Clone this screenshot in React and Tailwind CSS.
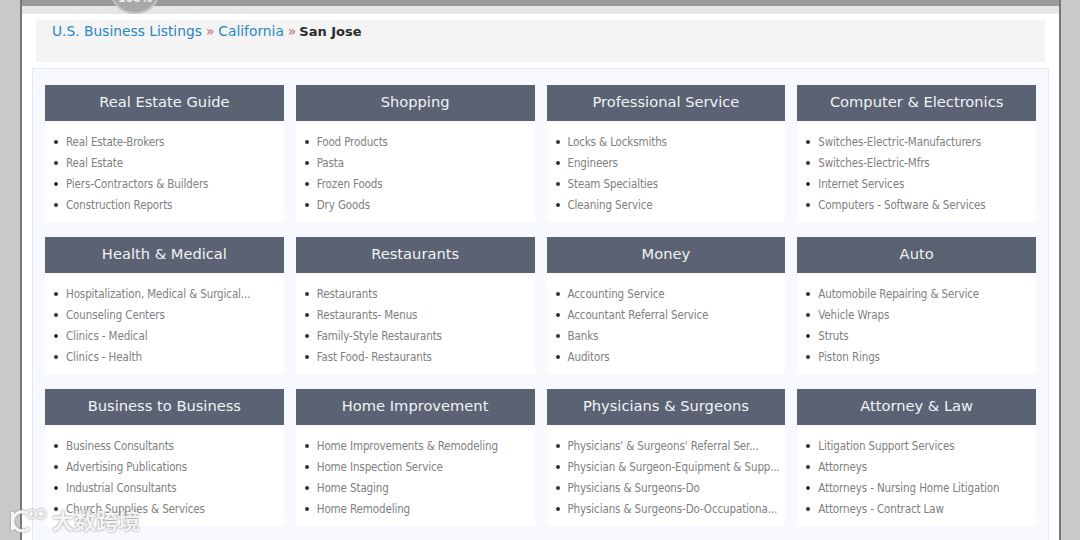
const categories = [
  { title: 'Real Estate Guide', items: ['Real Estate-Brokers', 'Real Estate', 'Piers-Contractors & Builders', 'Construction Reports'] },
  { title: 'Shopping', items: ['Food Products', 'Pasta', 'Frozen Foods', 'Dry Goods'] },
  { title: 'Professional Service', items: ['Locks & Locksmiths', 'Engineers', 'Steam Specialties', 'Cleaning Service'] },
  { title: 'Computer & Electronics', items: ['Switches-Electric-Manufacturers', 'Switches-Electric-Mfrs', 'Internet Services', 'Computers - Software & Services'] },
  { title: 'Health & Medical', items: ['Hospitalization, Medical & Surgical...', 'Counseling Centers', 'Clinics - Medical', 'Clinics - Health'] },
  { title: 'Restaurants', items: ['Restaurants', 'Restaurants- Menus', 'Family-Style Restaurants', 'Fast Food- Restaurants'] },
  { title: 'Money', items: ['Accounting Service', 'Accountant Referral Service', 'Banks', 'Auditors'] },
  { title: 'Auto', items: ['Automobile Repairing & Service', 'Vehicle Wraps', 'Struts', 'Piston Rings'] },
  { title: 'Business to Business', items: ['Business Consultants', 'Advertising Publications', 'Industrial Consultants', 'Church Supplies & Services'] },
  { title: 'Home Improvement', items: ['Home Improvements & Remodeling', 'Home Inspection Service', 'Home Staging', 'Home Remodeling'] },
  { title: 'Physicians & Surgeons', items: ["Physicians' & Surgeons' Referral Ser...", 'Physician & Surgeon-Equipment & Supp...', 'Physicians & Surgeons-Do', 'Physicians & Surgeons-Do-Occupationa...'] },
  { title: 'Attorney & Law', items: ['Litigation Support Services', 'Attorneys', 'Attorneys - Nursing Home Litigation', 'Attorneys - Contract Law'] },
];

function CategoryCard({ title, items }) {
  return (
    <div className="bg-white">
      <h3 className="h-9 bg-[#5a6274] text-center text-[14.67px] leading-[33px] font-normal text-[#f2f3f5]">{title}</h3>
      <ul className="h-[101px] pt-[10px] pl-[21px] font-['DejaVu_Sans_Condensed','DejaVu_Sans',sans-serif] text-[11.5px] tracking-[-0.12px] text-[#808080]">
        {items.map((item) => (
          <li key={item} className="relative h-[21px] leading-[23px] whitespace-nowrap">
            <span className="absolute left-[-12px] top-[9px] h-1 w-1 rounded-full bg-[#333]" />
            {item}
          </li>
        ))}
      </ul>
    </div>
  );
}

export default function App() {
  return (
    <div className="relative h-[540px] w-[1080px] overflow-hidden bg-[#c9c9c9] font-['DejaVu_Sans',sans-serif]">
      <div className="mx-[20px] h-full w-[1041px] border-x-2 border-[#777] bg-white">
        <div className="h-[6px] bg-[#999]" />
        <div className="h-2 bg-[#e5e6e7]" />

        <div className="mt-[6px] ml-[14px] h-[42px] w-[1009px] bg-[#f4f4f4] pl-[16px] pt-[1px] text-[13.8px] leading-5">
          <a className="text-[#2a86c0]">U.S. Business Listings</a>
          <span className="mx-[4px] text-[#c2607a]">»</span>
          <a className="text-[#2a86c0]">California</a>
          <span className="mr-[3px] ml-[4px] text-[#c2607a]">»</span>
          <b className="text-[13px] text-[#2b2b2b]">San Jose</b>
        </div>

        <div className="mt-[6px] ml-[10px] h-[480px] w-[1017px] border border-[#e0ecf8] bg-[#f7f9ff] pt-4 pl-3">
          <div className="grid w-[991px] grid-cols-4 gap-x-3 gap-y-[15px]">
            {categories.map((c) => (
              <CategoryCard key={c.title} title={c.title} items={c.items} />
            ))}
          </div>
        </div>
      </div>

      {/* badge poking in from the header */}
      <div className="absolute left-[110px] top-[-14px] flex h-[28px] w-[50px] items-end justify-center rounded-b-[24px] border-2 border-[#c4c4c4] bg-[#a8a8a8] pb-[8px] text-[11px] leading-none font-bold text-[#f0f0f0]">
        100%
      </div>

      {/* watermark */}
      <div className="absolute left-[9px] top-[504px] flex items-center gap-[3px] drop-shadow-[0_0_1px_#8a8a8a]">
        <svg width="40" height="30" viewBox="0 0 40 30" fill="none" stroke="#f6f6f6">
          <path d="M3.5 8 V26" strokeWidth="3" />
          <path d="M18 9 A9.5 9.5 0 1 0 20 24" strokeWidth="3" />
          <circle cx="22.5" cy="10" r="4" strokeWidth="1.6" />
          <circle cx="32" cy="10" r="4.5" strokeWidth="1.6" />
        </svg>
        <span className="font-['Noto_Sans_CJK_SC',sans-serif] text-[22px] leading-none font-bold text-[#f4f4f4]">大数跨境</span>
      </div>
    </div>
  );
}
